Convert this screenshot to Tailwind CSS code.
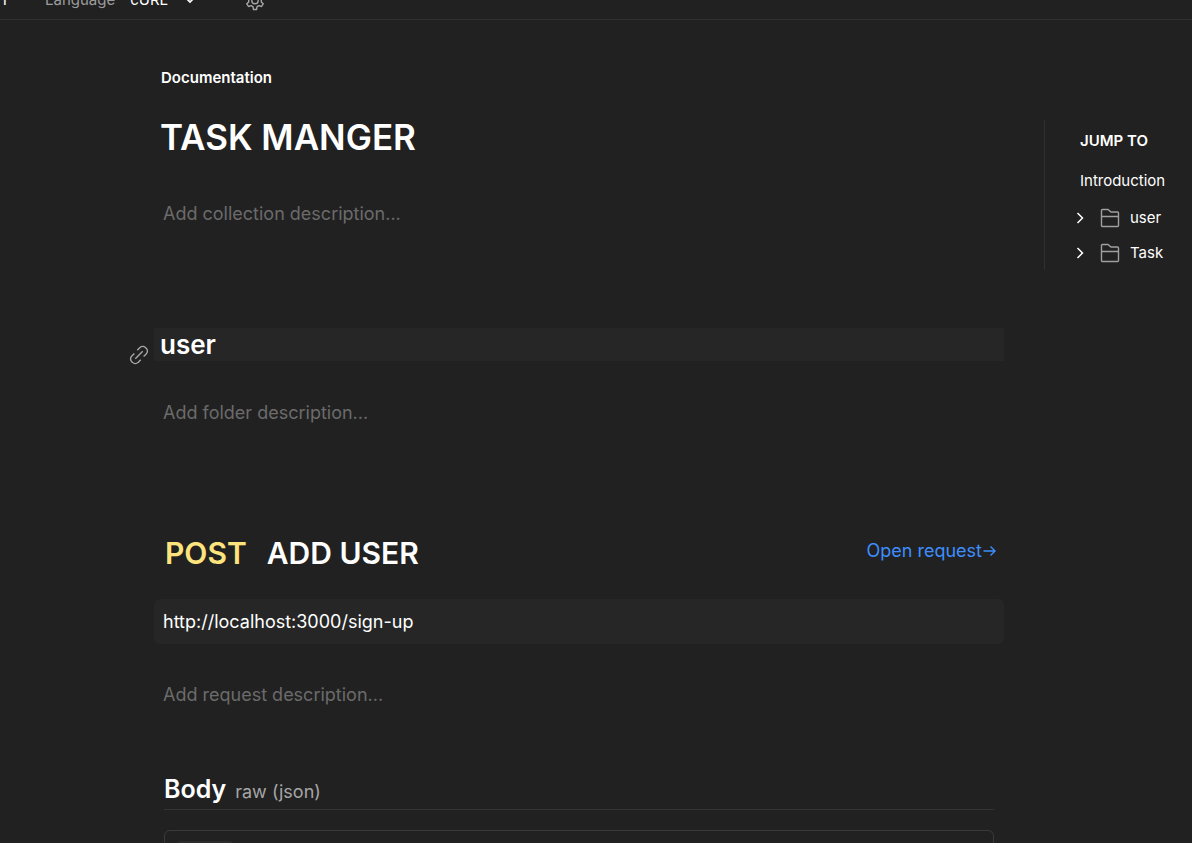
<!DOCTYPE html>
<html lang="en">
<head>
<meta charset="utf-8">
<meta name="viewport" content="width=device-width, initial-scale=1">
<title>TASK MANGER</title>
<script src="https://cdn.jsdelivr.net/npm/@tailwindcss/browser@4"></script>
</head>
<body class="h-screen overflow-hidden bg-[#212121] font-['Inter',sans-serif] text-white">
<header class="-mt-5 flex h-10 items-center border-b border-[#303030] pt-0.5 text-[15px]">
  <span class="w-[45px]">T</span>
  <label for="language" class="text-[#9c9c9c]">Language</label>
  <div class="ml-[15px] flex items-center">
    <select id="language" class="w-[54px] appearance-none bg-transparent"><option>cURL</option></select>
    <svg class="size-3" viewBox="0 0 12 12" fill="none" stroke="#fff" stroke-width="1.700" aria-hidden="true"><path d="M2.500 3.500 6 7l3.500-3.500"/></svg>
  </div>
  <button class="ml-[48px]" aria-label="Settings">
    <svg class="size-[22px]" viewBox="0 0 22 22" fill="none" stroke="#a6a6a6" stroke-width="1.400" stroke-linejoin="round"><path d="M9.500 1.500h3l.6 2.700 1.800 1 2.600-.8 1.700 2.700L17.300 9v3l1.900 1.800-1.700 2.700-2.600-.8-1.800 1-.6 2.800h-3l-.6-2.800-1.800-1-2.600.8-1.700-2.700L4.700 12V9L2.800 7.100l1.700-2.700 2.600.8 1.800-1z"/><circle cx="11" cy="10.500" r="3.200"/></svg>
  </button>
</header>

<div class="flex items-start gap-10 pl-[154px]">
  <main class="min-w-0 flex-1">
    <p class="mt-12 pl-[7px] text-[15px] leading-5 font-semibold">Documentation</p>
    <h1 class="mt-7 pl-[6px] text-[35px] leading-[43px] font-semibold">TASK MANGER</h1>
    <button class="mt-[43px] block pl-[9px] text-[18px] leading-6 text-[#6b6b6b]">Add collection description...</button>

    <section class="mt-[102px]">
      <div class="relative bg-[#262626]">
        <a href="#user" aria-label="Link to user" class="absolute top-[17px] -left-[25px]">
          <svg class="size-5" viewBox="0 0 20 20" fill="none" stroke="#a6a6a6" stroke-width="1.400"><path d="M8.300 5.200l2.600-2.600a3.800 3.800 0 0 1 5.600 0l.7.700a3.800 3.800 0 0 1 0 5.600l-2.600 2.600M11.700 14.800l-2.600 2.600a3.800 3.800 0 0 1-5.600 0l-.7-.7a3.800 3.800 0 0 1 0-5.600l2.600-2.600M6.300 13.700l7.400-7.400"/></svg>
        </a>
        <h2 id="user" class="pl-[6px] text-[26px] leading-[33px] font-semibold">user</h2>
      </div>
      <button class="mt-10 block pl-[9px] text-[18px] leading-6 text-[#6b6b6b]">Add folder description...</button>
    </section>

    <section class="mt-[106px]">
      <div class="flex items-center justify-between pr-2 pl-[11px]">
        <h2 class="flex gap-5 text-[30px] leading-11 font-semibold"><span class="text-[#ffe47e]">POST</span><span>ADD USER</span></h2>
        <a href="#request" class="-mt-1 flex items-center text-[18px] leading-6 text-[#3d8eff]">Open request<svg class="h-3 w-[14px]" viewBox="0 0 14 12" fill="none" stroke="currentColor" stroke-width="1.400" aria-hidden="true"><path d="M1.500 6h11M8.500 1.500 13 6l-4.500 4.500"/></svg></a>
      </div>
      <div class="mt-6 rounded-md bg-[#262626] px-[9px] text-[18px] leading-[45px]">http://localhost:3000/sign-up</div>
      <button class="mt-[39px] block pl-[9px] text-[18px] leading-6 text-[#6b6b6b]">Add request description...</button>

      <div class="mr-[10px] ml-[10px]">
        <div class="mt-[64px] flex items-baseline gap-[9px] border-b border-[#333] pb-[2px]">
          <h3 class="text-[25px] leading-9 font-semibold">Body</h3>
          <span class="text-[18px] text-[#a6a6a6]">raw (json)</span>
        </div>
        <div class="mt-5 h-20 rounded-md border border-[#3a3a3a] px-[10px] pt-[10px]">
          <div class="h-7 w-[60px] rounded-md bg-[#2b2b2b]"></div>
        </div>
      </div>
    </section>
  </main>

  <aside class="mt-[100px] h-[150px] w-[148px] shrink-0 border-l border-[#303030] text-[15px] leading-5">
    <h2 class="mt-[11px] pl-[35px] font-semibold">JUMP TO</h2>
    <nav class="mt-5 pl-[35px]">
      <a href="#" class="block">Introduction</a>
      <a href="#user" class="mt-[17px] -ml-[6px] flex items-center"><svg class="size-3" viewBox="0 0 12 12" fill="none" stroke="#fff" stroke-width="1.500" aria-hidden="true"><path d="M3.500 1 8.500 6l-5 5"/></svg><svg class="ml-[14px] size-5" viewBox="0 0 20 20" fill="none" stroke="#a0a0a0" stroke-width="1.400" aria-hidden="true"><path d="M1.500 8.500h17M2.500 1.500h5.500l3 2.500h6.500a1 1 0 0 1 1 1v12.500a1 1 0 0 1-1 1h-15a1 1 0 0 1-1-1v-15a1 1 0 0 1 1-1z"/></svg><span class="ml-[10px]">user</span></a>
      <a href="#task" class="mt-[15px] -ml-[6px] flex items-center"><svg class="size-3" viewBox="0 0 12 12" fill="none" stroke="#fff" stroke-width="1.500" aria-hidden="true"><path d="M3.500 1 8.500 6l-5 5"/></svg><svg class="ml-[14px] size-5" viewBox="0 0 20 20" fill="none" stroke="#a0a0a0" stroke-width="1.400" aria-hidden="true"><path d="M1.500 8.500h17M2.500 1.500h5.500l3 2.500h6.500a1 1 0 0 1 1 1v12.500a1 1 0 0 1-1 1h-15a1 1 0 0 1-1-1v-15a1 1 0 0 1 1-1z"/></svg><span class="ml-[10px]">Task</span></a>
    </nav>
  </aside>
</div>
</body>
</html>
